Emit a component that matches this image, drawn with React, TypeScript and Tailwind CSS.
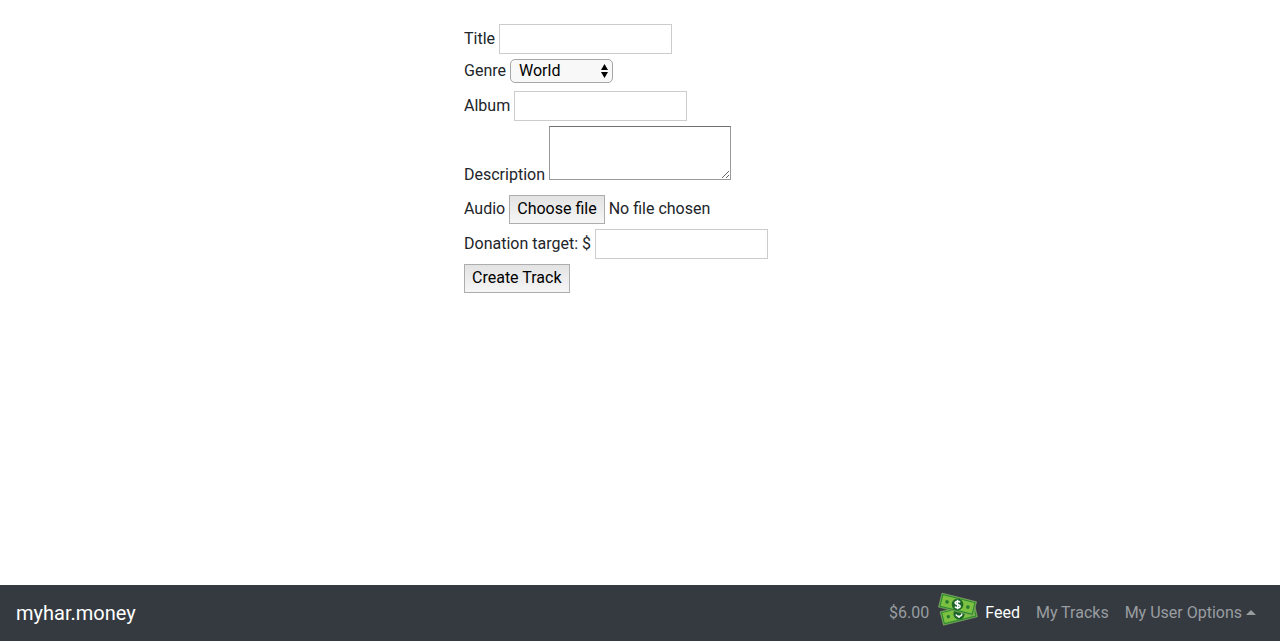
import React from "react";

const textInput =
  "h-[30px] w-[173px] border border-[#cccccc] bg-white px-1 outline-none focus:border-[#7aa7e0]";
const button =
  "h-[29px] border border-[#adadad] bg-linear-to-b from-[#e3e3e3] to-[#f6f6f6] px-[7px] text-black";

function MoneyIcon() {
  return (
    <svg width="42" height="34" viewBox="0 0 42 34" aria-hidden="true">
      <g transform="rotate(-14 22 22)">
        <rect x="4.2" y="15.2" width="35" height="14" fill="#86c440" stroke="#7f9a70" strokeWidth="0.6" />
        <rect x="5.4" y="16.4" width="32.6" height="11.6" fill="#7cc142" stroke="#2f8a35" strokeWidth="1.2" />
        <circle cx="11" cy="22" r="1.7" fill="#2a7a2f" />
        <circle cx="32.5" cy="22" r="1.7" fill="#2a7a2f" />
        <circle cx="22" cy="22" r="5.6" fill="#1c6428" />
      </g>
      <path d="M24.6 21.4c.9 2.4-2 3.2-3.7 2.8-1-.2-1.7-.8-2-1.6M22 24v2" fill="none" stroke="#fff" strokeWidth="1.5" />
      <g transform="rotate(14 20.5 12.5)">
        <rect x="2.7" y="5.2" width="35.6" height="14.4" fill="#86c440" stroke="#7f9a70" strokeWidth="0.6" />
        <rect x="3.9" y="6.4" width="33.2" height="12" fill="#7cc142" stroke="#2f8a35" strokeWidth="1.2" />
        <circle cx="9.8" cy="12.5" r="1.8" fill="#2a7a2f" />
        <circle cx="31.2" cy="12.5" r="1.8" fill="#2a7a2f" />
        <circle cx="20.5" cy="12.5" r="5.8" fill="#1c6428" />
      </g>
      <path d="M23 10.4c-1-1.5-5-1.4-4.9.6.1 1.9 5 .9 5 3.2 0 2-4.1 2.1-5.2.4M20.5 7.8v9.4" fill="none" stroke="#fff" strokeWidth="1.5" />
    </svg>
  );
}

export default function App() {
  const [fileName, setFileName] = React.useState("No file chosen");
  return (
    <div className="flex min-h-screen flex-col bg-white font-[Roboto,sans-serif] text-base leading-6 text-[#212529]">
      <main className="flex-1 px-4 pt-6">
        <form
          className="mx-auto flex max-w-[352px] flex-col gap-[5px]"
          onSubmit={(e) => e.preventDefault()}
        >
          <div className="flex items-center gap-1">
            <label htmlFor="title">Title</label>
            <input id="title" type="text" className={textInput} />
          </div>
          <div className="flex items-center gap-1 pb-[3px]">
            <label htmlFor="genre">Genre</label>
            <span className="relative flex">
              <select
                id="genre"
                defaultValue="World"
                className="h-6 w-[103px] appearance-none rounded-[5px] border border-[#a6a6a6] bg-[#f8f8f8] pl-2 leading-5 text-black"
              >
                <option>World</option>
                <option>Rock</option>
                <option>Jazz</option>
                <option>Electronic</option>
              </select>
              <svg
                className="pointer-events-none absolute top-1 right-1"
                width="9"
                height="16"
                viewBox="0 0 9 16"
                aria-hidden="true"
              >
                <path d="M4.5 1 8 7H1zM4.5 15 8 9H1z" fill="#000" />
              </svg>
            </span>
          </div>
          <div className="flex items-center gap-1">
            <label htmlFor="album">Album</label>
            <input id="album" type="text" className={textInput} />
          </div>
          <div className="flex items-end gap-1 pb-[3px]">
            <label htmlFor="description">Description</label>
            <textarea
              id="description"
              className="mb-[7px] h-[54px] w-[182px] resize border border-[#999999] border-t-[#707070] bg-white px-1 outline-none"
            />
          </div>
          <div className="flex items-baseline gap-1">
            <label htmlFor="audio">Audio</label>
            <span className="relative flex items-baseline gap-1">
              <span className={`${button} leading-[26px]`}>Choose file</span>
              <span>{fileName}</span>
              <input
                id="audio"
                type="file"
                className="absolute inset-0 w-full cursor-pointer opacity-0"
                onChange={(e) => setFileName(e.target.files?.[0]?.name ?? "No file chosen")}
              />
            </span>
          </div>
          <div className="flex items-center gap-1">
            <label htmlFor="donation">Donation target: $</label>
            <input id="donation" type="text" className={textInput} />
          </div>
          <button type="submit" className={`${button} self-start pb-0.5 leading-6`}>
            Create Track
          </button>
        </form>
      </main>
      <nav className="flex h-14 items-center justify-between bg-[#343a40] px-4 text-[#9a9da0]">
        <a href="#home" className="text-xl text-white">
          myhar.money
        </a>
        <div className="flex items-center">
          <span>$6.00</span>
          <span className="-mt-2 mr-1.5 ml-2">
            <MoneyIcon />
          </span>
          <a href="#feed" className="text-white">
            Feed
          </a>
          <a href="#tracks" className="ml-4">
            My Tracks
          </a>
          <button type="button" className="mr-2 ml-4 flex items-center gap-1">
            My User Options
            <svg width="10" height="7" viewBox="0 0 10 7" aria-hidden="true">
              <path d="M0 5 5 0l5 5z" fill="currentColor" />
            </svg>
          </button>
        </div>
      </nav>
    </div>
  );
}
